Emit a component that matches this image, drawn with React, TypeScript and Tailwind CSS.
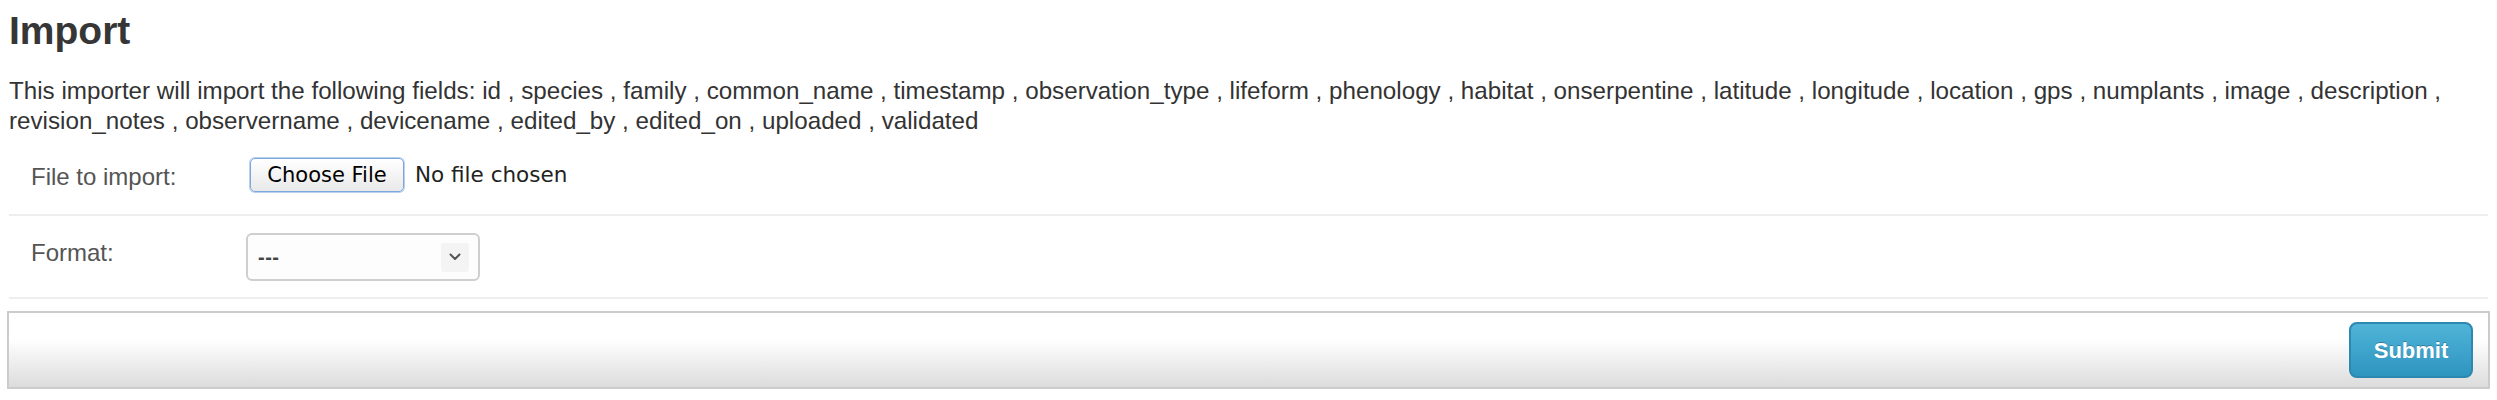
const fields = [
  "id", "species", "family", "common_name", "timestamp", "observation_type", "lifeform",
  "phenology", "habitat", "onserpentine", "latitude", "longitude", "location", "gps",
  "numplants", "image", "description", "revision_notes", "observername", "devicename",
  "edited_by", "edited_on", "uploaded", "validated",
];

export default function App() {
  return (
    <div className="min-h-[400px] bg-white px-[9px] font-['Liberation_Sans',Arial,sans-serif] text-[#333]">
      <h2 className="pt-[7px] text-[39px] leading-[48px] font-bold text-[#363636]">Import</h2>
      <p className="mt-[21px] text-[24.2px] leading-[30px] text-[#333]">
        This importer will import the following fields: {fields.join(" , ")}
      </p>

      <form onSubmit={(e) => e.preventDefault()}>
        <div className="flex h-[80px] items-start border-b-2 border-[#eeeeee]">
          <label className="w-[237px] pt-[26px] pl-[22px] text-[24px] leading-[30px] text-[#555]">
            File to import:
          </label>
          <div className="flex items-center pt-[22px] pl-[4px]">
            <button
              type="button"
              className="h-[34px] w-[154px] rounded-[5px] border border-[#7aa7dc] bg-[linear-gradient(to_bottom,#ffffff,#e9e9e9)] font-['DejaVu_Sans',sans-serif] text-[21px] leading-none text-black shadow-[0_0_0_1px_#b9d1ef]"
            >
              Choose File
            </button>
            <span className="ml-[11px] font-['DejaVu_Sans',sans-serif] text-[21.5px] text-[#222]">No file chosen</span>
          </div>
        </div>

        <div className="flex h-[83px] items-start border-b-2 border-[#eeeeee]">
          <label className="w-[237px] pt-[22px] pl-[22px] text-[24px] leading-[30px] text-[#555]">Format:</label>
          <div className="pt-[17px]">
            <div className="flex h-[48px] w-[234px] items-center justify-between rounded-[6px] border-2 border-[#cfcfcf] bg-[#fdfdfd] pr-[9px] pl-[10px]">
              <span className="text-[20px] font-bold tracking-[0.5px] text-[#444]">---</span>
              <span className="flex h-[29px] w-[28px] items-center justify-center rounded-[3px] bg-[#f4f4f4]">
                <svg width="12" height="8" viewBox="0 0 12 8" fill="none">
                  <path d="M1.5 1.5 L6 6 L10.5 1.5" stroke="#555" strokeWidth="2" strokeLinecap="round" strokeLinejoin="round" />
                </svg>
              </span>
            </div>
          </div>
        </div>

        <div className="mt-[12px] -mx-[2px] flex h-[78px] items-center justify-end border-2 border-[#cccccc] bg-[linear-gradient(to_bottom,#ffffff_35%,#dcdcdc_100%)] pr-[15px]">
          <button
            type="submit"
            className="h-[56px] w-[124px] rounded-[8px] border-2 border-[#2c88b0] bg-[linear-gradient(to_bottom,#50b4d8,#2e95c0)] text-[22px] font-bold text-white [text-shadow:0_-1px_0_rgba(0,0,0,0.25)]"
          >
            Submit
          </button>
        </div>
      </form>
    </div>
  );
}
